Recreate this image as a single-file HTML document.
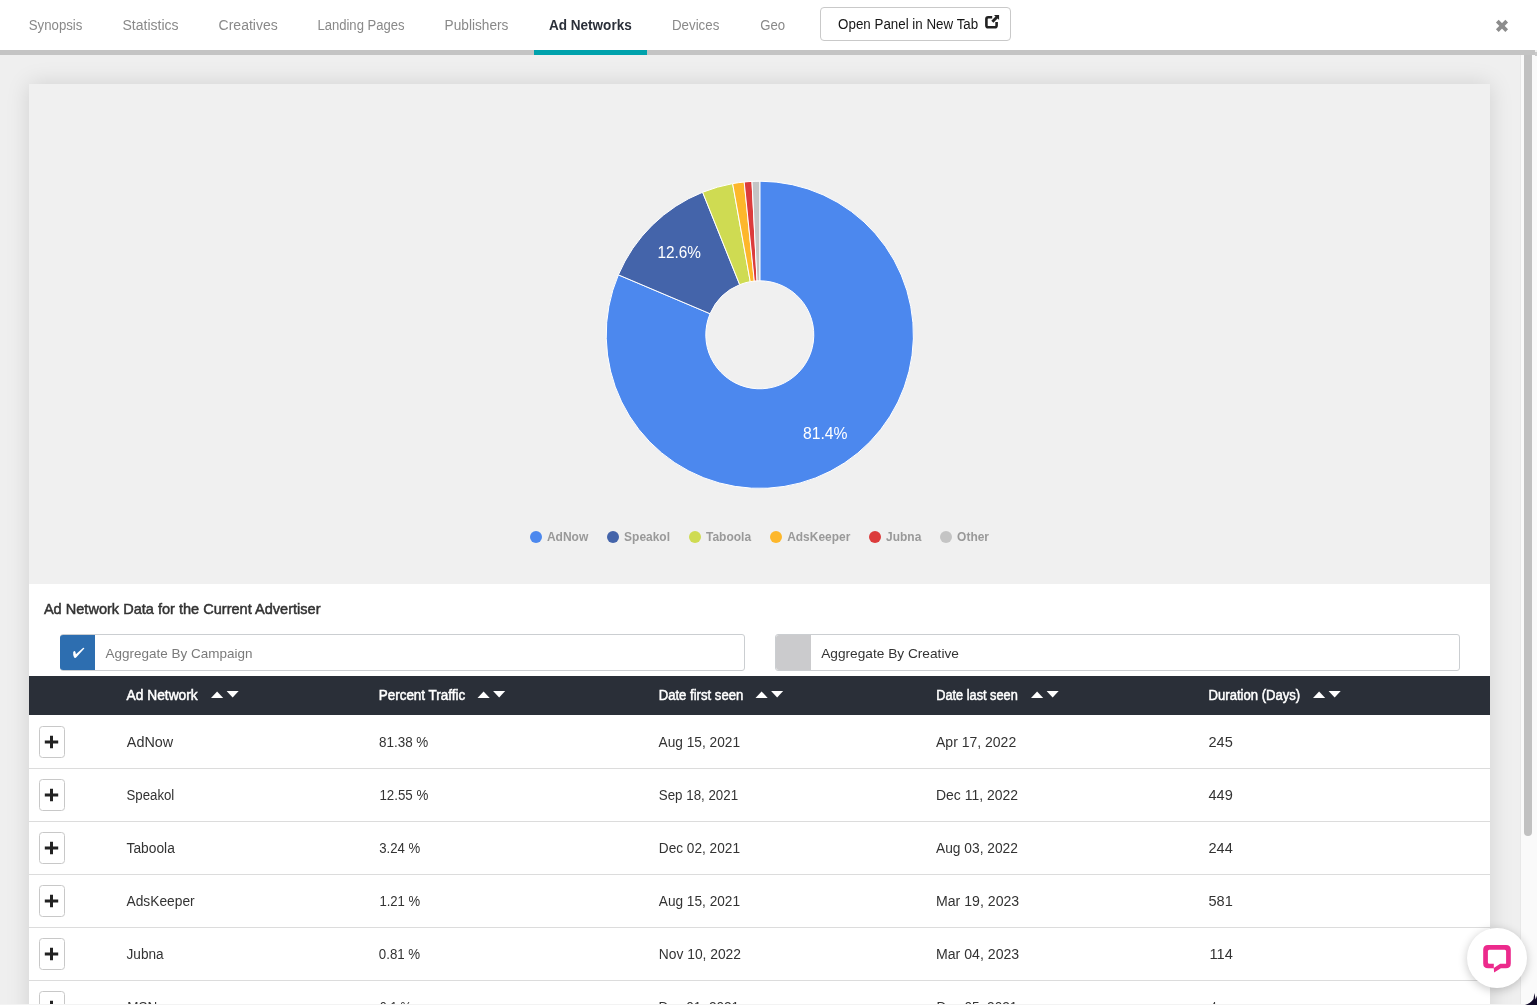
<!DOCTYPE html>
<html><head><meta charset="utf-8"><style>
html,body{margin:0;padding:0;}
body{width:1537px;height:1005px;overflow:hidden;position:relative;background:#efefef;font-family:"Liberation Sans", sans-serif;}
.abs{position:absolute;}
#nav{left:0;top:0;width:1537px;height:50px;background:#fff;}
#navbar{left:0;top:50px;width:1535px;height:5px;background:#c4c4c4;}
#teal{left:534px;top:50px;width:113px;height:5px;background:#00a2ac;}
#btn{left:820px;top:7px;width:189px;height:32px;border:1px solid #c9c9c9;border-radius:4px;background:#fff;}
#card{left:29px;top:84px;width:1461px;height:1000px;background:#fff;box-shadow:0 0 22px rgba(0,0,0,0.13);}
#piebg{left:29px;top:84px;width:1461px;height:500px;background:#f0f0f0;}
#track{left:1520px;top:55px;width:17px;height:950px;background:#fafafa;border-left:1px solid #e8e8e8;box-sizing:border-box;}
#thumb{left:1524px;top:55px;width:8px;height:781px;background:#c1c1c1;border-radius:0 0 4px 4px;}
#cb1{left:59.5px;top:634px;width:683px;height:35px;border:1px solid #cbced1;border-radius:3px;background:#fff;}
#cb1b{left:60px;top:635px;width:35px;height:35px;background:#2d6eb0;border-radius:3px 0 0 3px;}
#cb2{left:775px;top:634px;width:683px;height:35px;border:1px solid #cbced1;border-radius:3px;background:#fff;}
#cb2b{left:776px;top:635px;width:35px;height:35px;background:#cbcbcd;border-radius:3px 0 0 3px;}
#thead{left:29px;top:676px;width:1461px;height:38.5px;background:#2a2f38;}
#bottom{left:0;top:1003.5px;width:1537px;height:2px;background:#f3f3f3;}
#chat{left:1467px;top:928px;width:60px;height:60px;border-radius:50%;background:#fff;box-shadow:0 2px 10px rgba(0,0,0,0.22);}
svg{position:absolute;left:0;top:0;will-change:transform;}
</style></head><body>
<div class="abs" id="card"></div>
<div class="abs" id="piebg"></div>
<div class="abs" id="nav"></div>
<div class="abs" id="navbar"></div>
<div class="abs" id="teal"></div>
<div class="abs" id="btn"></div>
<div class="abs" id="cb1"></div><div class="abs" id="cb1b"></div>
<div class="abs" id="cb2"></div><div class="abs" id="cb2b"></div>
<div class="abs" id="thead"></div>
<svg width="1537" height="1005" viewBox="0 0 1537 1005" style="font-family:"Liberation Sans", sans-serif">
<rect x="29" y="768" width="1461" height="1" fill="#dcdcdc"/><rect x="29" y="821" width="1461" height="1" fill="#dcdcdc"/><rect x="29" y="874" width="1461" height="1" fill="#dcdcdc"/><rect x="29" y="927" width="1461" height="1" fill="#dcdcdc"/><rect x="29" y="980" width="1461" height="1" fill="#dcdcdc"/>
<path d="M759.80,181.20 A153.6,153.6 0 1 1 618.38,274.86 L710.08,313.73 A54.0,54.0 0 1 0 759.80,280.80 Z" fill="#4c88ee" stroke="#ffffff" stroke-width="1"/>
<path d="M618.38,274.86 A153.6,153.6 0 0 1 702.63,192.24 L739.70,284.68 A54.0,54.0 0 0 0 710.08,313.73 Z" fill="#4464aa" stroke="#ffffff" stroke-width="1"/>
<path d="M702.63,192.24 A153.6,153.6 0 0 1 732.63,183.62 L750.25,281.65 A54.0,54.0 0 0 0 739.70,284.68 Z" fill="#cfdb52" stroke="#ffffff" stroke-width="1"/>
<path d="M732.63,183.62 A153.6,153.6 0 0 1 744.19,182.00 L754.31,281.08 A54.0,54.0 0 0 0 750.25,281.65 Z" fill="#fdb72b" stroke="#ffffff" stroke-width="1"/>
<path d="M744.19,182.00 A153.6,153.6 0 0 1 751.99,181.40 L757.05,280.87 A54.0,54.0 0 0 0 754.31,281.08 Z" fill="#dc3c3c" stroke="#ffffff" stroke-width="1"/>
<path d="M751.99,181.40 A153.6,153.6 0 0 1 759.80,181.20 L759.80,280.80 A54.0,54.0 0 0 0 757.05,280.87 Z" fill="#c4c4c4" stroke="#ffffff" stroke-width="1"/>
<circle cx="536" cy="537" r="6" fill="#4c88ee"/>
<circle cx="613" cy="537" r="6" fill="#4464aa"/>
<circle cx="695" cy="537" r="6" fill="#cfdb52"/>
<circle cx="776" cy="537" r="6" fill="#fdb72b"/>
<circle cx="875" cy="537" r="6" fill="#dc3c3c"/>
<circle cx="946" cy="537" r="6" fill="#c4c4c4"/>
<path d="M211,698 L217.1,691.4 L223.2,698 Z" fill="#fff"/><path d="M226.6,691 L238.7,691 L232.65,697.5 Z" fill="#fff"/><path d="M477.5,698 L483.6,691.4 L489.7,698 Z" fill="#fff"/><path d="M493.1,691 L505.2,691 L499.15,697.5 Z" fill="#fff"/><path d="M755.5,698 L761.6,691.4 L767.7,698 Z" fill="#fff"/><path d="M771.1,691 L783.2,691 L777.15,697.5 Z" fill="#fff"/><path d="M1031,698 L1037.1,691.4 L1043.2,698 Z" fill="#fff"/><path d="M1046.6,691 L1058.7,691 L1052.65,697.5 Z" fill="#fff"/><path d="M1313,698 L1319.1,691.4 L1325.2,698 Z" fill="#fff"/><path d="M1328.6,691 L1340.7,691 L1334.65,697.5 Z" fill="#fff"/>
<rect x="39.5" y="726.5" width="25" height="31" rx="3" fill="#fff" stroke="#c8c8c8" stroke-width="1"/><path d="M44.8,742 H58.2 M51.5,735.8 V748.2" stroke="#222" stroke-width="3"/><rect x="39.5" y="779.5" width="25" height="31" rx="3" fill="#fff" stroke="#c8c8c8" stroke-width="1"/><path d="M44.8,795 H58.2 M51.5,788.8 V801.2" stroke="#222" stroke-width="3"/><rect x="39.5" y="832.5" width="25" height="31" rx="3" fill="#fff" stroke="#c8c8c8" stroke-width="1"/><path d="M44.8,848 H58.2 M51.5,841.8 V854.2" stroke="#222" stroke-width="3"/><rect x="39.5" y="885.5" width="25" height="31" rx="3" fill="#fff" stroke="#c8c8c8" stroke-width="1"/><path d="M44.8,901 H58.2 M51.5,894.8 V907.2" stroke="#222" stroke-width="3"/><rect x="39.5" y="938.5" width="25" height="31" rx="3" fill="#fff" stroke="#c8c8c8" stroke-width="1"/><path d="M44.8,954 H58.2 M51.5,947.8 V960.2" stroke="#222" stroke-width="3"/><rect x="39.5" y="991.5" width="25" height="31" rx="3" fill="#fff" stroke="#c8c8c8" stroke-width="1"/><path d="M44.8,1007 H58.2 M51.5,1000.8 V1013.2" stroke="#222" stroke-width="3"/>
<path d="M73.2,652.2 Q74,650.6 75,651.2 Q75.6,651.8 75.9,654.2 L83,648 Q84.2,647.3 84.3,648.6 L76.6,657 Q75.3,658.5 74.1,657.5 Q72.8,655.3 73.2,652.2 Z" fill="#fff"/>
<path d="M1497.3,21.2 L1506.7,30.6 M1506.7,21.2 L1497.3,30.6" stroke="#8c8c8c" stroke-width="3.8"/>
<path d="M992.2,17.3 H988.2 Q986.4,17.3 986.4,19.1 V25.5 Q986.4,27.3 988.2,27.3 H994.8 Q996.6,27.3 996.6,25.5 V22" stroke="#222" stroke-width="2.6" fill="none"/><path d="M994,15 L999.1,15 L999.1,20.1 L997.6,18.6 L993.4,22.8 L991.3,20.7 L995.5,16.5 Z" fill="#222"/>
<text x="28.80" y="30.00" font-size="14" font-weight="normal" fill="#898989" textLength="53.60" lengthAdjust="spacingAndGlyphs">Synopsis</text>
<text x="122.50" y="30.00" font-size="14" font-weight="normal" fill="#898989" textLength="56.10" lengthAdjust="spacingAndGlyphs">Statistics</text>
<text x="218.60" y="30.00" font-size="14" font-weight="normal" fill="#898989" textLength="59.10" lengthAdjust="spacingAndGlyphs">Creatives</text>
<text x="317.40" y="30.00" font-size="14" font-weight="normal" fill="#898989" textLength="87.20" lengthAdjust="spacingAndGlyphs">Landing Pages</text>
<text x="444.60" y="30.00" font-size="14" font-weight="normal" fill="#898989" textLength="63.80" lengthAdjust="spacingAndGlyphs">Publishers</text>
<text x="549.00" y="30.00" font-size="14" font-weight="bold" fill="#2b303a" textLength="82.70" lengthAdjust="spacingAndGlyphs">Ad Networks</text>
<text x="672.00" y="30.00" font-size="14" font-weight="normal" fill="#898989" textLength="47.30" lengthAdjust="spacingAndGlyphs">Devices</text>
<text x="760.20" y="30.00" font-size="14" font-weight="normal" fill="#898989" textLength="24.90" lengthAdjust="spacingAndGlyphs">Geo</text>
<text x="838.10" y="29.00" font-size="14" font-weight="normal" fill="#161616" textLength="140.10" lengthAdjust="spacingAndGlyphs">Open Panel in New Tab</text>
<text x="657.40" y="258.10" font-size="17" font-weight="normal" fill="#ffffff" textLength="43.50" lengthAdjust="spacingAndGlyphs">12.6%</text>
<text x="803.00" y="439.00" font-size="17" font-weight="normal" fill="#ffffff" textLength="44.60" lengthAdjust="spacingAndGlyphs">81.4%</text>
<text x="546.90" y="541.10" font-size="13" font-weight="bold" fill="#999999" textLength="41.40" lengthAdjust="spacingAndGlyphs">AdNow</text>
<text x="624.10" y="541.10" font-size="13" font-weight="bold" fill="#999999" textLength="45.90" lengthAdjust="spacingAndGlyphs">Speakol</text>
<text x="706.00" y="541.10" font-size="13" font-weight="bold" fill="#999999" textLength="45.10" lengthAdjust="spacingAndGlyphs">Taboola</text>
<text x="787.20" y="541.10" font-size="13" font-weight="bold" fill="#999999" textLength="63.10" lengthAdjust="spacingAndGlyphs">AdsKeeper</text>
<text x="886.10" y="541.10" font-size="13" font-weight="bold" fill="#999999" textLength="35.20" lengthAdjust="spacingAndGlyphs">Jubna</text>
<text x="957.10" y="541.10" font-size="13" font-weight="bold" fill="#999999" textLength="31.90" lengthAdjust="spacingAndGlyphs">Other</text>
<text x="43.90" y="613.90" font-size="15" font-weight="normal" fill="#333" stroke="#333" stroke-width="0.5" textLength="276.60" lengthAdjust="spacingAndGlyphs">Ad Network Data for the Current Advertiser</text>
<text x="105.60" y="657.50" font-size="13.5" font-weight="normal" fill="#7a7a7a" textLength="146.80" lengthAdjust="spacingAndGlyphs">Aggregate By Campaign</text>
<text x="821.20" y="657.50" font-size="13.5" font-weight="normal" fill="#333" textLength="137.70" lengthAdjust="spacingAndGlyphs">Aggregate By Creative</text>
<text x="126.60" y="699.90" font-size="14" font-weight="normal" fill="#ffffff" stroke="#ffffff" stroke-width="0.5" textLength="71.10" lengthAdjust="spacingAndGlyphs">Ad Network</text>
<text x="378.70" y="699.90" font-size="14" font-weight="normal" fill="#ffffff" stroke="#ffffff" stroke-width="0.5" textLength="86.60" lengthAdjust="spacingAndGlyphs">Percent Traffic</text>
<text x="658.70" y="699.90" font-size="14" font-weight="normal" fill="#ffffff" stroke="#ffffff" stroke-width="0.5" textLength="84.60" lengthAdjust="spacingAndGlyphs">Date first seen</text>
<text x="936.20" y="699.90" font-size="14" font-weight="normal" fill="#ffffff" stroke="#ffffff" stroke-width="0.5" textLength="81.60" lengthAdjust="spacingAndGlyphs">Date last seen</text>
<text x="1208.60" y="699.90" font-size="14" font-weight="normal" fill="#ffffff" stroke="#ffffff" stroke-width="0.5" textLength="91.60" lengthAdjust="spacingAndGlyphs">Duration (Days)</text>
<text x="126.80" y="746.80" font-size="14" font-weight="normal" fill="#333" textLength="46.40" lengthAdjust="spacingAndGlyphs">AdNow</text>
<text x="379.00" y="746.80" font-size="14" font-weight="normal" fill="#333" textLength="49.30" lengthAdjust="spacingAndGlyphs">81.38 %</text>
<text x="658.60" y="746.80" font-size="14" font-weight="normal" fill="#333" textLength="81.40" lengthAdjust="spacingAndGlyphs">Aug 15, 2021</text>
<text x="936.00" y="746.80" font-size="14" font-weight="normal" fill="#333" textLength="80.20" lengthAdjust="spacingAndGlyphs">Apr 17, 2022</text>
<text x="1208.50" y="746.80" font-size="14" font-weight="normal" fill="#333" textLength="24.30" lengthAdjust="spacingAndGlyphs">245</text>
<text x="126.50" y="799.80" font-size="14" font-weight="normal" fill="#333" textLength="47.80" lengthAdjust="spacingAndGlyphs">Speakol</text>
<text x="379.40" y="799.80" font-size="14" font-weight="normal" fill="#333" textLength="48.90" lengthAdjust="spacingAndGlyphs">12.55 %</text>
<text x="658.80" y="799.80" font-size="14" font-weight="normal" fill="#333" textLength="79.30" lengthAdjust="spacingAndGlyphs">Sep 18, 2021</text>
<text x="936.00" y="799.80" font-size="14" font-weight="normal" fill="#333" textLength="81.90" lengthAdjust="spacingAndGlyphs">Dec 11, 2022</text>
<text x="1208.50" y="799.80" font-size="14" font-weight="normal" fill="#333" textLength="24.30" lengthAdjust="spacingAndGlyphs">449</text>
<text x="126.50" y="852.80" font-size="14" font-weight="normal" fill="#333" textLength="48.30" lengthAdjust="spacingAndGlyphs">Taboola</text>
<text x="379.20" y="852.80" font-size="14" font-weight="normal" fill="#333" textLength="41.00" lengthAdjust="spacingAndGlyphs">3.24 %</text>
<text x="658.80" y="852.80" font-size="14" font-weight="normal" fill="#333" textLength="81.20" lengthAdjust="spacingAndGlyphs">Dec 02, 2021</text>
<text x="936.00" y="852.80" font-size="14" font-weight="normal" fill="#333" textLength="81.90" lengthAdjust="spacingAndGlyphs">Aug 03, 2022</text>
<text x="1208.50" y="852.80" font-size="14" font-weight="normal" fill="#333" textLength="24.30" lengthAdjust="spacingAndGlyphs">244</text>
<text x="126.50" y="905.80" font-size="14" font-weight="normal" fill="#333" textLength="68.20" lengthAdjust="spacingAndGlyphs">AdsKeeper</text>
<text x="379.40" y="905.80" font-size="14" font-weight="normal" fill="#333" textLength="40.80" lengthAdjust="spacingAndGlyphs">1.21 %</text>
<text x="658.80" y="905.80" font-size="14" font-weight="normal" fill="#333" textLength="81.20" lengthAdjust="spacingAndGlyphs">Aug 15, 2021</text>
<text x="936.00" y="905.80" font-size="14" font-weight="normal" fill="#333" textLength="83.20" lengthAdjust="spacingAndGlyphs">Mar 19, 2023</text>
<text x="1208.50" y="905.80" font-size="14" font-weight="normal" fill="#333" textLength="24.30" lengthAdjust="spacingAndGlyphs">581</text>
<text x="126.50" y="958.80" font-size="14" font-weight="normal" fill="#333" textLength="37.10" lengthAdjust="spacingAndGlyphs">Jubna</text>
<text x="378.80" y="958.80" font-size="14" font-weight="normal" fill="#333" textLength="41.40" lengthAdjust="spacingAndGlyphs">0.81 %</text>
<text x="658.80" y="958.80" font-size="14" font-weight="normal" fill="#333" textLength="82.20" lengthAdjust="spacingAndGlyphs">Nov 10, 2022</text>
<text x="936.00" y="958.80" font-size="14" font-weight="normal" fill="#333" textLength="83.20" lengthAdjust="spacingAndGlyphs">Mar 04, 2023</text>
<text x="1209.50" y="958.80" font-size="14" font-weight="normal" fill="#333" textLength="23.30" lengthAdjust="spacingAndGlyphs">114</text>
<text x="127.30" y="1011.80" font-size="14" font-weight="normal" fill="#333" textLength="30.00" lengthAdjust="spacingAndGlyphs">MSN</text>
<text x="379.70" y="1011.80" font-size="14" font-weight="normal" fill="#333" textLength="32.10" lengthAdjust="spacingAndGlyphs">0.1 %</text>
<text x="658.40" y="1011.80" font-size="14" font-weight="normal" fill="#333" textLength="80.70" lengthAdjust="spacingAndGlyphs">Dec 01, 2021</text>
<text x="936.60" y="1011.80" font-size="14" font-weight="normal" fill="#333" textLength="80.70" lengthAdjust="spacingAndGlyphs">Dec 05, 2021</text>
<text x="1210.70" y="1011.80" font-size="14" font-weight="normal" fill="#333" textLength="5.60" lengthAdjust="spacingAndGlyphs">4</text>
</svg>
<div class="abs" id="track"></div>
<div class="abs" id="thumb"></div>
<div class="abs" id="bottom"></div>
<div class="abs" style="left:1535px;top:51.5px;width:2px;height:4px;background:#cacaca"></div>
<div class="abs" id="chat"></div>
<svg width="1537" height="1005" style="pointer-events:none">
<path fill-rule="evenodd" fill="#ec2a8c" d="M1488,945 H1506 Q1510.8,945 1510.8,949.8 V963.5 Q1510.8,968.3 1506,968.3 H1500.9 L1494.1,972.6 L1493.8,968.3 H1488 Q1483.2,968.3 1483.2,963.5 V949.8 Q1483.2,945 1488,945 Z M1489.4,949.7 H1504.6 Q1506.1,949.7 1506.1,951.2 V963.7 H1500.2 L1493.8,968 V963.7 H1489.4 Q1487.9,963.7 1487.9,962.2 V951.2 Q1487.9,949.7 1489.4,949.7 Z"/>
<path d="M1525,1005 Q1530.5,1003.5 1533.5,999 L1534.4,993 L1535.6,999.5 L1537,995.5 V1005 Z" fill="#120a2a"/>
</svg>
</body></html>
